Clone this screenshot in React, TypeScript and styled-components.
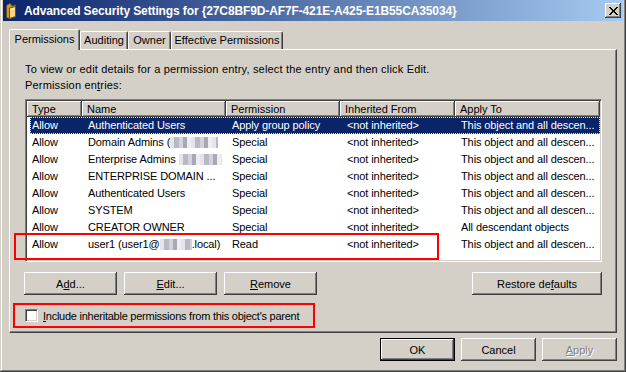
import styled, { createGlobalStyle } from 'styled-components';

const GlobalStyle = createGlobalStyle`
  html, body {
    margin: 0;
    padding: 0;
  }
  body {
    background: #d4d0c8;
    font-family: 'Liberation Sans', Arial, sans-serif;
    font-size: 11px;
    color: #000;
  }
`;

type Entry = {
  type: string;
  name: React.ReactNode;
  perm: string;
  inherited: string;
  apply: string;
  selected?: boolean;
};

const Window = styled.div`
  width: 626px;
  height: 372px;
  box-sizing: border-box;
  padding: 0 3px 3px;
  background: #d4d0c8;
  display: flex;
  flex-direction: column;
  box-shadow: inset -1px -1px #404040, inset 1px 0 #d4d0c8,
    inset -2px -2px #808080, inset 2px 0 #fff;
`;

const TitleBar = styled.div`
  height: 21px;
  display: flex;
  align-items: center;
  padding: 0 2px 0 3px;
  background: linear-gradient(90deg, #0a246a 0%, #a6caf0 100%);
  color: #fff;
  font-weight: bold;
  font-size: 12px;
  white-space: nowrap;
`;

const TitleText = styled.span`
  margin-left: 7px;
  flex: 1;
  letter-spacing: -0.12px;
`;

const CloseBtn = styled.div`
  width: 16px;
  height: 15px;
  box-sizing: border-box;
  background: #d4d0c8;
  display: flex;
  align-items: center;
  justify-content: center;
  box-shadow: inset -1px -1px #404040, inset 1px 1px #fff,
    inset -2px -2px #808080;
`;

const Body = styled.div`
  flex: 1;
  display: flex;
  flex-direction: column;
  padding: 8px 6px 0;
`;

const TabRow = styled.div`
  height: 20px;
  display: flex;
  align-items: flex-end;
  position: relative;
  z-index: 1;
`;

const Tab = styled.div<{ $w: number; $active?: boolean }>`
  width: ${({ $w }) => $w}px;
  height: ${({ $active }) => ($active ? 21 : 18)}px;
  margin-bottom: ${({ $active }) => ($active ? -1 : 0)}px;
  box-sizing: border-box;
  background: #d4d0c8;
  border-top: 1px solid #fff;
  border-left: 1px solid #fff;
  border-right: 1px solid #404040;
  border-radius: 2px 2px 0 0;
  box-shadow: inset -1px 0 #808080;
  display: flex;
  justify-content: center;
  padding-top: ${({ $active }) => ($active ? 3 : 2)}px;
  line-height: 13px;
  white-space: nowrap;
`;

const Panel = styled.div`
  height: 284px;
  box-sizing: border-box;
  border-top: 1px solid #fff;
  border-left: 1px solid #fff;
  border-right: 1px solid #404040;
  border-bottom: 1px solid #404040;
  box-shadow: inset -1px -1px #808080;
  padding: 11px 14px 0 15px;
  display: flex;
  flex-direction: column;
`;

const Intro = styled.div`
  line-height: 16px;
  white-space: nowrap;
  letter-spacing: 0.18px;
`;

const ListView = styled.div`
  position: relative;
  margin-top: 6px;
  height: 163px;
  box-sizing: border-box;
  background: #fff;
  border: 1px solid;
  border-color: #808080 #fff #fff #808080;
  box-shadow: inset 1px 1px #404040, inset -1px -1px #d4d0c8;
  padding: 1px;
`;

const HeaderRow = styled.div`
  display: grid;
  grid-template-columns: 55px 144px 114px 115px 145px;
  height: 16px;
`;

const HeaderCell = styled.div`
  background: #d4d0c8;
  box-shadow: inset -1px -1px #404040, inset 1px 1px #fff,
    inset -2px -2px #808080;
  line-height: 16px;
  padding-left: 5px;
  white-space: nowrap;
  overflow: hidden;
`;

const Row = styled.div<{ $selected?: boolean }>`
  display: grid;
  grid-template-columns: 52px 144px 114px 115px 145px;
  margin-left: 3px;
  height: 17px;
  line-height: 17px;
  background: ${({ $selected }) => ($selected ? '#0a246a' : 'transparent')};
  color: ${({ $selected }) => ($selected ? '#fff' : '#000')};
  outline: ${({ $selected }) => ($selected ? '1px dotted #f2e6a8' : 'none')};
  outline-offset: -1px;
`;

const Cell = styled.div<{ $pad?: number }>`
  padding-left: ${({ $pad }) => $pad ?? 6}px;
  white-space: nowrap;
  overflow: hidden;
  letter-spacing: -0.1px;
`;

const Redact = styled.span<{ $w: number }>`
  display: inline-block;
  width: ${({ $w }) => $w}px;
  height: 11px;
  vertical-align: -2px;
  background: repeating-linear-gradient(
    90deg,
    #e4e4ea 0 4px,
    #b9b9c4 4px 9px,
    #d2d2da 9px 13px,
    #a9a9b6 13px 17px,
    #eeeef2 17px 21px
  );
`;

const Callout = styled.div`
  position: absolute;
  left: -12px;
  top: 133px;
  width: 425px;
  height: 27px;
  box-sizing: border-box;
  border: 2px solid #ff0000;
  pointer-events: none;
`;

const ButtonRow = styled.div`
  display: flex;
  gap: 7px;
  margin-top: 10px;
  margin-left: -1px;
`;

const Button = styled.div<{ $w: number; $default?: boolean; $disabled?: boolean }>`
  width: ${({ $w }) => $w}px;
  height: 23px;
  box-sizing: border-box;
  background: #d4d0c8;
  display: flex;
  align-items: center;
  justify-content: center;
  white-space: nowrap;
  color: ${({ $disabled }) => ($disabled ? '#808080' : '#000')};
  text-shadow: ${({ $disabled }) => ($disabled ? '1px 1px #fff' : 'none')};
  border: ${({ $default }) => ($default ? '1px solid #000' : 'none')};
  box-shadow: inset -1px -1px #404040, inset 1px 1px #fff,
    inset -2px -2px #808080;
`;

const Spacer = styled.div`
  flex: 1;
`;

const CheckFrame = styled.div`
  margin-top: 8px;
  margin-left: -12px;
  width: 302px;
  height: 25px;
  box-sizing: border-box;
  border: 2px solid #ff0000;
  display: flex;
  align-items: center;
  padding-left: 10px;
  gap: 5px;
  white-space: nowrap;
  letter-spacing: -0.25px;
`;

const CheckBox = styled.div`
  flex: 0 0 13px;
  width: 13px;
  height: 13px;
  box-sizing: border-box;
  background: #fff;
  border: 1px solid;
  border-color: #808080 #fff #fff #808080;
  box-shadow: inset 1px 1px #404040, inset -1px -1px #d4d0c8;
`;

const DialogButtons = styled.div`
  display: flex;
  justify-content: flex-end;
  gap: 6px;
  margin-top: 5px;
`;

const FolderIcon = () => (
  <svg width="11" height="16" viewBox="0 0 11 16">
    <path d="M0.5 2.5 L3.5 0.5 L5.5 1.5 L5.5 3 L9.5 2 L9.5 13.5 L3.5 15.5 L0.5 14.5 Z" fill="#c99a2e" stroke="#6e5210" />
    <path d="M3.5 5 L9.5 3.5 L9.5 13.5 L3.5 15.5 Z" fill="#f3d77a" stroke="#6e5210" />
    <path d="M4.5 6 L8.5 5 L8.5 6 L4.5 7 Z" fill="#fff3c0" />
  </svg>
);

const CloseGlyph = () => (
  <svg width="9" height="8" viewBox="0 0 9 8" shapeRendering="crispEdges">
    <g fill="#000">
      <rect x="0" y="0" width="2" height="1" />
      <rect x="7" y="0" width="2" height="1" />
      <rect x="1" y="1" width="2" height="1" />
      <rect x="6" y="1" width="2" height="1" />
      <rect x="2" y="2" width="2" height="1" />
      <rect x="5" y="2" width="2" height="1" />
      <rect x="3" y="3" width="3" height="2" />
      <rect x="2" y="5" width="2" height="1" />
      <rect x="5" y="5" width="2" height="1" />
      <rect x="1" y="6" width="2" height="1" />
      <rect x="6" y="6" width="2" height="1" />
      <rect x="0" y="7" width="2" height="1" />
      <rect x="7" y="7" width="2" height="1" />
    </g>
  </svg>
);

const descen = 'This object and all descen...';
const notInh = '<not inherited>';

const entries: Entry[] = [
  { type: 'Allow', name: 'Authenticated Users', perm: 'Apply group policy', inherited: notInh, apply: descen, selected: true },
  { type: 'Allow', name: <>Domain Admins (<Redact $w={48} /></>, perm: 'Special', inherited: notInh, apply: descen },
  { type: 'Allow', name: <>Enterprise Admins <Redact $w={43} /></>, perm: 'Special', inherited: notInh, apply: descen },
  { type: 'Allow', name: 'ENTERPRISE DOMAIN ...', perm: 'Special', inherited: notInh, apply: descen },
  { type: 'Allow', name: 'Authenticated Users', perm: 'Special', inherited: notInh, apply: descen },
  { type: 'Allow', name: 'SYSTEM', perm: 'Special', inherited: notInh, apply: descen },
  { type: 'Allow', name: 'CREATOR OWNER', perm: 'Special', inherited: notInh, apply: 'All descendant objects' },
  { type: 'Allow', name: <>user1 (user1@<Redact $w={32} />.local)</>, perm: 'Read', inherited: notInh, apply: descen },
];

export default function App() {
  return (
    <>
      <GlobalStyle />
      <Window>
        <TitleBar>
          <FolderIcon />
          <TitleText>Advanced Security Settings for {'{27C8BF9D-AF7F-421E-A425-E1B55CA35034}'}</TitleText>
          <CloseBtn>
            <CloseGlyph />
          </CloseBtn>
        </TitleBar>
        <Body>
          <TabRow>
            <Tab $w={71} $active>Permissions</Tab>
            <Tab $w={48}>Auditing</Tab>
            <Tab $w={43}>Owner</Tab>
            <Tab $w={112}>Effective Permissions</Tab>
          </TabRow>
          <Panel>
            <Intro>To view or edit details for a permission entry, select the entry and then click Edit.</Intro>
            <Intro>
              Permission en<u>t</u>ries:
            </Intro>
            <ListView>
              <HeaderRow>
                <HeaderCell>Type</HeaderCell>
                <HeaderCell>Name</HeaderCell>
                <HeaderCell>Permission</HeaderCell>
                <HeaderCell>Inherited From</HeaderCell>
                <HeaderCell>Apply To</HeaderCell>
              </HeaderRow>
              {entries.map((e, i) => (
                <Row key={i} $selected={e.selected}>
                  <Cell $pad={2}>{e.type}</Cell>
                  <Cell>{e.name}</Cell>
                  <Cell>{e.perm}</Cell>
                  <Cell $pad={7}>{e.inherited}</Cell>
                  <Cell>{e.apply}</Cell>
                </Row>
              ))}
              <Callout />
            </ListView>
            <ButtonRow>
              <Button $w={93}>
                A<u>d</u>d...
              </Button>
              <Button $w={93}>
                <u>E</u>dit...
              </Button>
              <Button $w={93}>
                <u>R</u>emove
              </Button>
              <Spacer />
              <Button $w={130}>
                Restore de<u>f</u>aults
              </Button>
            </ButtonRow>
            <CheckFrame>
              <CheckBox />
              <span>
                <u>I</u>nclude inheritable permissions from this object's parent
              </span>
            </CheckFrame>
          </Panel>
          <DialogButtons>
            <Button $w={75} $default>
              OK
            </Button>
            <Button $w={75}>Cancel</Button>
            <Button $w={75} $disabled>
              <u>A</u>pply
            </Button>
          </DialogButtons>
        </Body>
      </Window>
    </>
  );
}
